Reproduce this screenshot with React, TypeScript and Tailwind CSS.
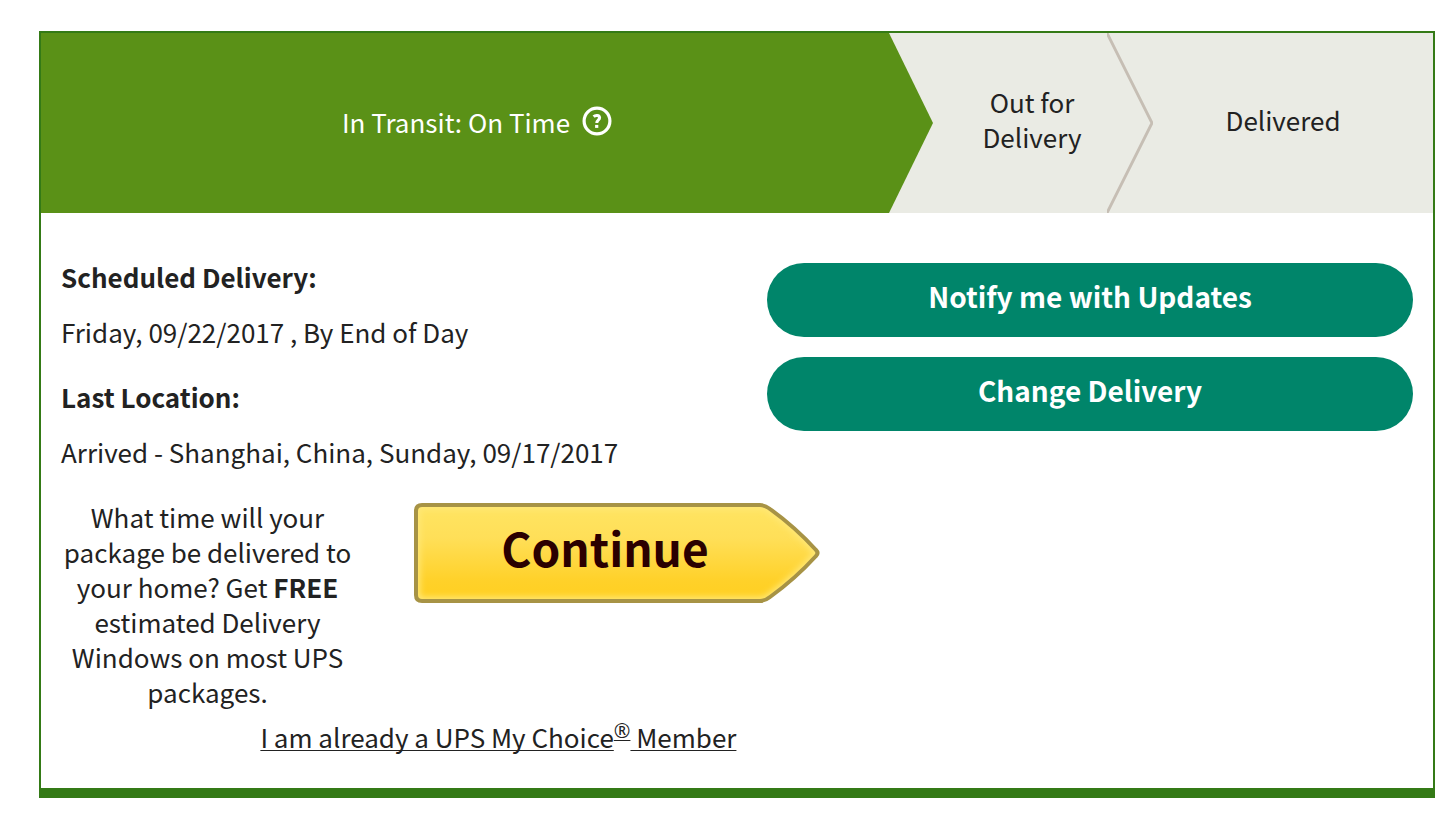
import type { ReactNode } from 'react';

// --- Interfaces ---
interface DetailProps {
  label: string;
  children: ReactNode;
}

function Detail({ label, children }: DetailProps) {
  return (
    <div className="flex flex-col gap-5">
      <dt className="font-bold">{label}</dt>
      <dd>{children}</dd>
    </div>
  );
}

function PillButton({ children }: { children: ReactNode }) {
  return (
    <button type="button" className="h-[74px] w-full rounded-full bg-[#00856a] pb-2 text-[28px] font-bold text-white">
      {children}
    </button>
  );
}

function HelpIcon() {
  return (
    <svg width="30" height="30" viewBox="0 0 30 30" fill="none" stroke="currentColor" aria-hidden="true">
      <circle cx="15" cy="15" r="12.9" strokeWidth="3.2" />
      <path d="M11.6 10.6C13.3 9 17.4 8.9 17.6 11.7C17.7 13.9 14.8 13.7 14.8 17" strokeWidth="3" />
      <path d="M13.1 20.4h3.2" strokeWidth="3" />
    </svg>
  );
}

function StatusBar() {
  return (
    <ol className="grid h-[180px] grid-cols-[892fr_220fr_280fr] bg-[#eaebe4] text-center">
      <li className="flex">
        <div className="flex flex-1 items-center justify-center gap-3 bg-[#5a9117] pb-1 pl-6 text-white">
          <span>In Transit: On Time</span>
          <button type="button" aria-label="Help">
            <HelpIcon />
          </button>
        </div>
        <svg width="44" height="180" viewBox="0 0 44 180" aria-hidden="true">
          <path d="M0 0L44 90L0 180Z" fill="#5a9117" />
        </svg>
      </li>
      <li className="flex">
        <div className="flex flex-1 items-center justify-center pb-2 pl-6">
          <span className="w-[120px]">Out for Delivery</span>
        </div>
        <svg width="46" height="180" viewBox="0 0 46 180" fill="none" aria-hidden="true">
          <path d="M0 0L45 90L0 180" stroke="#c6beb4" strokeWidth="2.8" />
        </svg>
      </li>
      <li className="flex items-center justify-center pr-5 pb-2">Delivered</li>
    </ol>
  );
}

function ContinueButton() {
  return (
    <button
      type="button"
      className="relative mt-1 h-[100px] w-[406px] shrink-0 pr-6 pb-3 text-[46px] font-bold text-[#2b0000]"
    >
      <svg className="absolute inset-0" width="406" height="100" viewBox="0 0 406 100" aria-hidden="true">
        <defs>
          <linearGradient id="gold" x1="0" y1="0" x2="0" y2="1">
            <stop offset="0" stopColor="#ffe563" />
            <stop offset="0.35" stopColor="#ffdf58" />
            <stop offset="0.78" stopColor="#ffd129" />
            <stop offset="1" stopColor="#ffcf20" />
          </linearGradient>
          <filter id="soften" x="-5%" y="-10%" width="110%" height="120%">
            <feGaussianBlur stdDeviation="3" />
          </filter>
          <clipPath id="arrow">
            <path d="M8 2H346Q351 2 356 6Q381 24 402 47Q405 50 402 53Q381 76 356 94Q351 98 346 98H8Q2 98 2 92V8Q2 2 8 2Z" />
          </clipPath>
        </defs>
        <g clipPath="url(#arrow)">
          <rect width="406" height="100" fill="url(#gold)" />
          <path
            d="M8 2H346Q351 2 356 6Q381 24 402 47Q405 50 402 53Q381 76 356 94Q351 98 346 98H8Q2 98 2 92V8Q2 2 8 2Z"
            fill="none"
            stroke="#ffe878"
            strokeWidth="8"
            filter="url(#soften)"
          />
        </g>
        <path
          d="M8 2H346Q351 2 356 6Q381 24 402 47Q405 50 402 53Q381 76 356 94Q351 98 346 98H8Q2 98 2 92V8Q2 2 8 2Z"
          fill="none"
          stroke="#a79345"
          strokeWidth="4"
        />
      </svg>
      <span className="relative">Continue</span>
    </button>
  );
}

export default function App() {
  return (
    <main className="bg-white pt-[31px] pr-[9px] pb-4 pl-[39px] font-['Noto_Sans_CJK_SC','Open_Sans',sans-serif] text-[26px] leading-[35px] text-[#222]">
      <section className="border-2 border-b-[10px] border-[#347a16]">
        <StatusBar />

        <div className="px-5 pt-[46px] pb-[34px]">
          <div className="grid grid-cols-[706fr_646fr]">
            <dl className="flex flex-col gap-[30px]">
              <Detail label="Scheduled Delivery:">Friday, 09/22/2017 , By End of Day</Detail>
              <Detail label="Last Location:">Arrived - Shanghai, China, Sunday, 09/17/2017</Detail>
            </dl>
            <div className="flex flex-col gap-5 pt-1">
              <PillButton>Notify me with Updates</PillButton>
              <PillButton>Change Delivery</PillButton>
            </div>
          </div>

          {/* My Choice sign up */}
          <div className="mt-[30px] w-[65%]">
            <div className="flex items-start gap-[60px]">
              <p className="w-[293px] text-center">
                What time will your package be delivered to your home? Get <b className="inline-block">FREE</b> estimated
                Delivery Windows on most UPS packages.
              </p>
              <ContinueButton />
            </div>
            <p className="mt-[10px] pr-1 text-center">
              <a href="#member" className="underline-offset-2 [text-decoration-skip-ink:none]">
                <span className="underline decoration-1">I am already a UPS My Choice</span>
                <sup className="font-['Open_Sans',sans-serif] text-xl leading-none underline decoration-1">®</sup>
                <span className="underline decoration-1"> Member</span>
              </a>
            </p>
          </div>
        </div>
      </section>
    </main>
  );
}
